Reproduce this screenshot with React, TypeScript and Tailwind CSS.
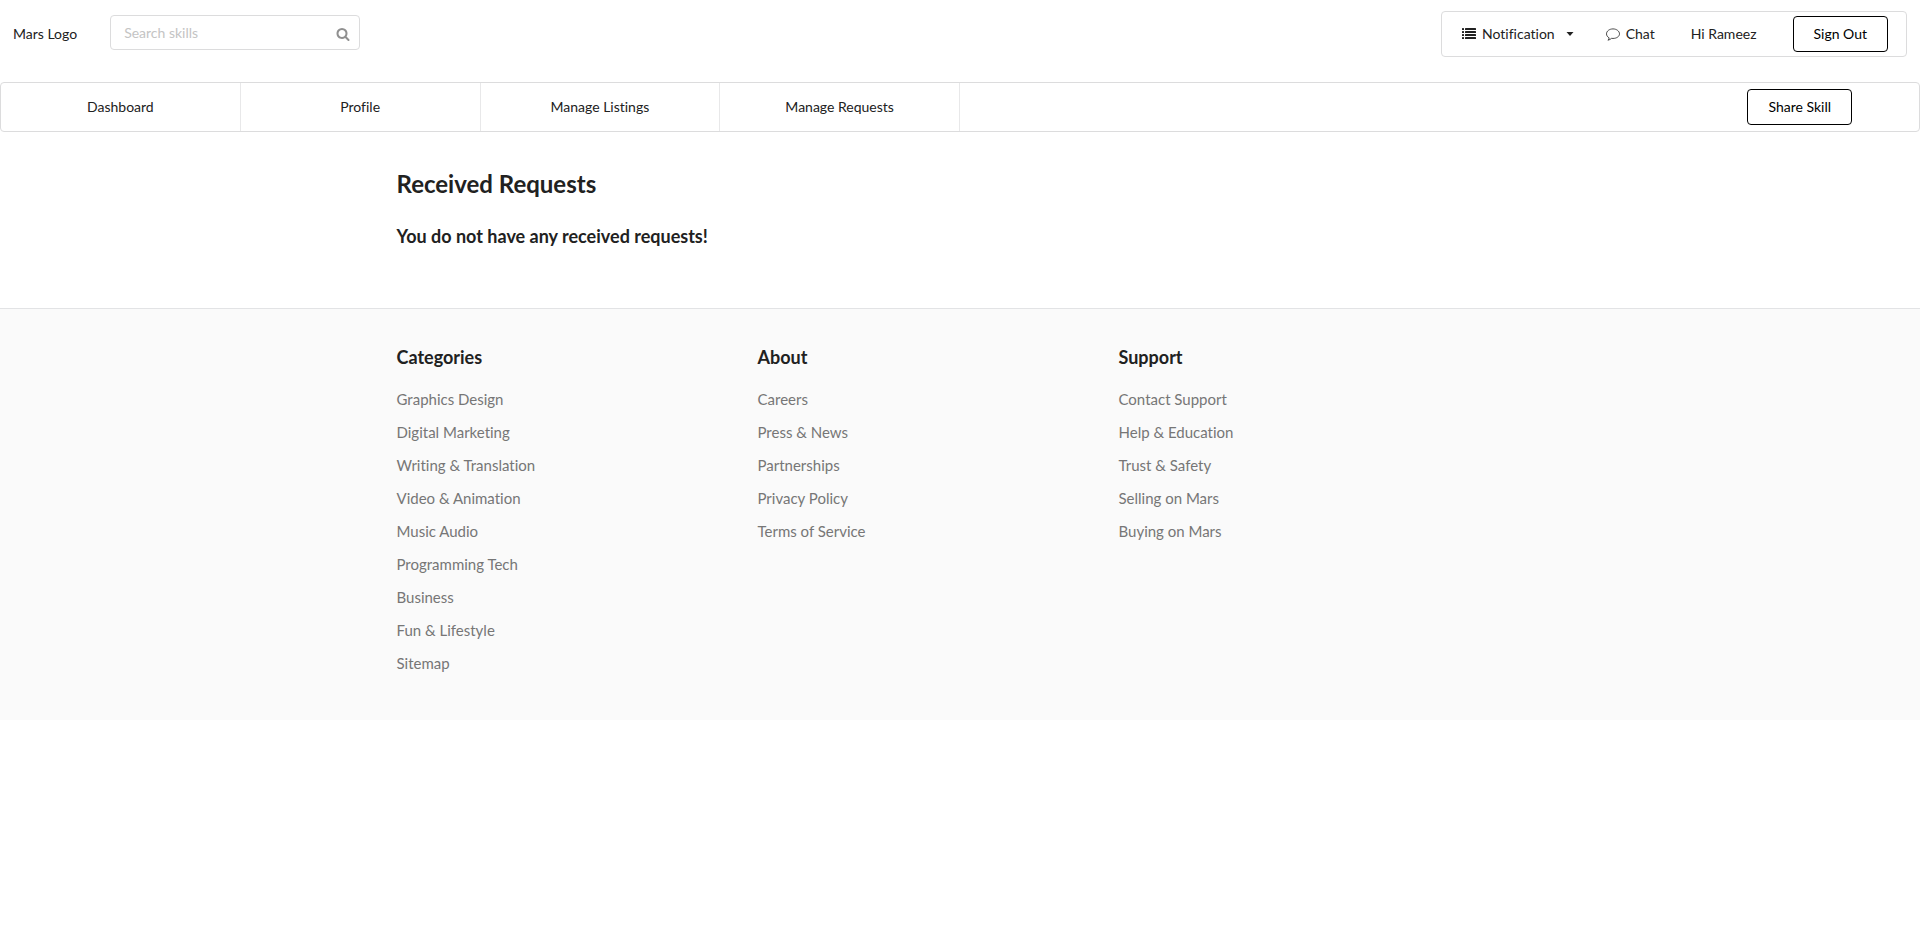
import React from "react";

const navItems = ["Dashboard", "Profile", "Manage Listings", "Manage Requests"];

const footerColumns = [
  {
    title: "Categories",
    links: [
      "Graphics Design",
      "Digital Marketing",
      "Writing & Translation",
      "Video & Animation",
      "Music Audio",
      "Programming Tech",
      "Business",
      "Fun & Lifestyle",
      "Sitemap",
    ],
  },
  {
    title: "About",
    links: ["Careers", "Press & News", "Partnerships", "Privacy Policy", "Terms of Service"],
  },
  {
    title: "Support",
    links: ["Contact Support", "Help & Education", "Trust & Safety", "Selling on Mars", "Buying on Mars"],
  },
];

function SearchIcon() {
  return (
    <svg viewBox="0 0 1792 1792" className="size-3.5 fill-current" aria-hidden="true">
      <path d="M1216 832q0-185-131.5-316.5T768 384 451.5 515.5 320 832t131.5 316.5T768 1280t316.5-131.5T1216 832zm512 832q0 52-38 90t-90 38q-54 0-90-38l-343-342q-179 124-399 124-143 0-273.5-55.5t-225-150-150-225T64 832t55.5-273.5 150-225 225-150T768 128t273.5 55.5 225 150 150 225T1472 832q0 220-124 399l343 343q37 37 37 90z" />
    </svg>
  );
}

function ListIcon() {
  return (
    <svg viewBox="0 0 14 14" className="size-3.5 fill-current" aria-hidden="true">
      {[1, 4, 7, 10].map((y) => (
        <g key={y}>
          <rect x="0" y={y} width="2" height="2" rx="0.25" />
          <rect x="3" y={y} width="11" height="2" rx="0.25" />
        </g>
      ))}
    </svg>
  );
}

function CommentIcon() {
  return (
    <svg viewBox="0 0 14 14" className="size-3.5" fill="none" stroke="currentColor" strokeWidth="0.8" aria-hidden="true">
      <path
        d="M7 1.9C3.4 1.9.5 4.100.5 6.900c0 1.700 1.050 3.100 2.700 4-.25 1-.6 1.600-1.250 2.300 1.500-.35 2.650-.95 3.600-1.850.45.06.95.1 1.450.1 3.600 0 6.500-2 6.500-4.600S10.600 1.900 7 1.900z"
        strokeLinejoin="round"
      />
    </svg>
  );
}

function CaretIcon() {
  return (
    <svg viewBox="0 0 8 4" className="h-1 w-2 fill-current" aria-hidden="true">
      <path d="M0.5 0h7L4 4z" />
    </svg>
  );
}

function OutlineButton({ children }: { children: React.ReactNode }) {
  return (
    <button type="button" className="h-9 rounded border border-black bg-white px-5 text-black">
      {children}
    </button>
  );
}

export default function App() {
  return (
    <div className="min-h-screen bg-white font-['Lato',sans-serif] text-sm text-[#212121] [font-variant-ligatures:no-common-ligatures]">
      <header className="flex h-[82px] items-start px-[13px] pt-[11px]">
        <a href="#" className="mt-[13px] leading-5">
          Mars Logo
        </a>
        <div className="relative mt-1 ml-[33px] w-[250px]">
          <input
            type="text"
            aria-label="Search skills"
            placeholder="Search skills"
            className="h-[35px] w-full rounded border border-[#dcdcdd] bg-white pr-9 pl-[13px] outline-none placeholder:text-[#c4c4c4]"
          />
          <button type="button" aria-label="Search" className="absolute top-3 right-2.5 text-[#909090]">
            <SearchIcon />
          </button>
        </div>
        <div className="ml-auto flex h-[46px] items-center rounded border border-[#dcdcdd] pr-[18px] pl-5">
          <button type="button" className="flex items-center">
            <ListIcon />
            <span className="ml-1.5">Notification</span>
            <span className="ml-[11px]">
              <CaretIcon />
            </span>
          </button>
          <a href="#" className="ml-8 flex items-center">
            <CommentIcon />
            <span className="ml-1.5">Chat</span>
          </a>
          <span className="mr-9 ml-9">Hi Rameez</span>
          <OutlineButton>Sign Out</OutlineButton>
        </div>
      </header>

      <nav className="flex h-[50px] items-center rounded border border-[#dcdcdd]">
        {navItems.map((item) => (
          <a
            key={item}
            href="#"
            className="flex h-full w-1/8 items-center justify-center border-r border-[#e8e8e9]"
          >
            {item}
          </a>
        ))}
        <div className="mr-[67px] ml-auto">
          <OutlineButton>Share Skill</OutlineButton>
        </div>
      </nav>

      <main className="mx-auto max-w-[1127px] pt-9 pb-[60px]">
        <h1 className="text-2xl leading-8 font-bold">Received Requests</h1>
        <h2 className="mt-6 text-lg leading-6 font-bold">You do not have any received requests!</h2>
      </main>

      <footer className="border-t border-[#e2e3e5] bg-[#fafafa] pt-9 pb-10">
        <div className="mx-auto grid max-w-[1127px] grid-cols-3 pr-11">
          {footerColumns.map((column) => (
            <section key={column.title}>
              <h3 className="text-lg leading-6 font-bold">{column.title}</h3>
              <ul className="mt-3.5 text-[15px] leading-[33px] text-[#767676]">
                {column.links.map((link) => (
                  <li key={link}>
                    <a href="#">{link}</a>
                  </li>
                ))}
              </ul>
            </section>
          ))}
        </div>
      </footer>
    </div>
  );
}
